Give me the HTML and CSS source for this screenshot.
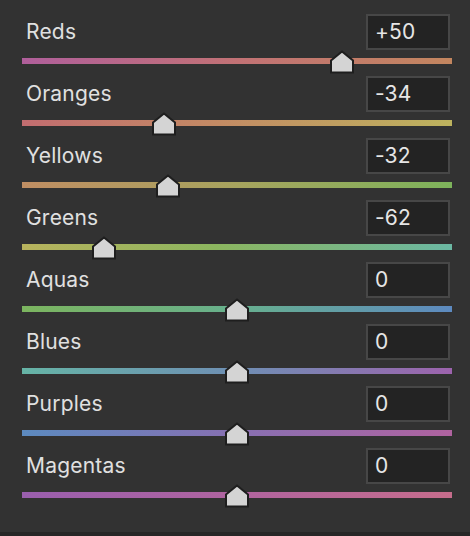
FILE: index.html
```html
<!DOCTYPE html>
<html>
<head>
<meta charset="utf-8">
<link rel="stylesheet" href="styles.css">
</head>
<body>
<div class="panel">
  <div class="row">
    <div class="head"><span class="label">Reds</span><div class="box">+50</div></div>
    <div class="track reds"><svg class="thumb" style="left: calc(74.4% - 13px)" width="26" height="24" viewBox="0 0 26 24"><polygon points="13,1.5 24,10.5 24,22.5 2,22.5 2,10.5"/></svg></div>
  </div>
  <div class="row">
    <div class="head"><span class="label">Oranges</span><div class="box">-34</div></div>
    <div class="track oranges"><svg class="thumb" style="left: calc(33% - 13px)" width="26" height="24" viewBox="0 0 26 24"><polygon points="13,1.5 24,10.5 24,22.5 2,22.5 2,10.5"/></svg></div>
  </div>
  <div class="row">
    <div class="head"><span class="label">Yellows</span><div class="box">-32</div></div>
    <div class="track yellows"><svg class="thumb" style="left: calc(34% - 13px)" width="26" height="24" viewBox="0 0 26 24"><polygon points="13,1.5 24,10.5 24,22.5 2,22.5 2,10.5"/></svg></div>
  </div>
  <div class="row">
    <div class="head"><span class="label">Greens</span><div class="box">-62</div></div>
    <div class="track greens"><svg class="thumb" style="left: calc(19% - 13px)" width="26" height="24" viewBox="0 0 26 24"><polygon points="13,1.5 24,10.5 24,22.5 2,22.5 2,10.5"/></svg></div>
  </div>
  <div class="row">
    <div class="head"><span class="label">Aquas</span><div class="box">0</div></div>
    <div class="track aquas"><svg class="thumb" style="left: calc(50% - 13px)" width="26" height="24" viewBox="0 0 26 24"><polygon points="13,1.5 24,10.5 24,22.5 2,22.5 2,10.5"/></svg></div>
  </div>
  <div class="row">
    <div class="head"><span class="label">Blues</span><div class="box">0</div></div>
    <div class="track blues"><svg class="thumb" style="left: calc(50% - 13px)" width="26" height="24" viewBox="0 0 26 24"><polygon points="13,1.5 24,10.5 24,22.5 2,22.5 2,10.5"/></svg></div>
  </div>
  <div class="row">
    <div class="head"><span class="label">Purples</span><div class="box">0</div></div>
    <div class="track purples"><svg class="thumb" style="left: calc(50% - 13px)" width="26" height="24" viewBox="0 0 26 24"><polygon points="13,1.5 24,10.5 24,22.5 2,22.5 2,10.5"/></svg></div>
  </div>
  <div class="row">
    <div class="head"><span class="label">Magentas</span><div class="box">0</div></div>
    <div class="track magentas"><svg class="thumb" style="left: calc(50% - 13px)" width="26" height="24" viewBox="0 0 26 24"><polygon points="13,1.5 24,10.5 24,22.5 2,22.5 2,10.5"/></svg></div>
  </div>
</div>
<div class="footer"></div>
</body>
</html>
```
FILE: styles.css
```css
html, body {
  margin: 0;
  padding: 0;
  background: #262626;
}
body {
  width: 470px;
  height: 536px;
  overflow: hidden;
  font-family: Inter, "Noto Sans", sans-serif;
}
.panel {
  background: #323232;
  height: 532px;
  box-sizing: border-box;
  padding: 14px 18px 0 22px;
  display: flex;
  flex-direction: column;
}
.row {
  display: flex;
  flex-direction: column;
  height: 62px;
}
.head {
  display: flex;
  align-items: center;
  justify-content: space-between;
  height: 36px;
}
.label {
  margin-left: 4px;
  color: #e0e0e0;
  font-size: 21px;
  letter-spacing: 0.2px;
  line-height: 24px;
}
.box {
  width: 84px;
  height: 36px;
  box-sizing: border-box;
  margin-right: 2px;
  border: 2px solid #474747;
  background: #232323;
  color: #e6e6e6;
  font-size: 21px;
  letter-spacing: 0.2px;
  line-height: 32px;
  padding-left: 7px;
}
.track {
  position: relative;
  margin-top: 8px;
  height: 6px;
}
.thumb {
  position: absolute;
  top: -8px;
  display: block;
}
.thumb polygon {
  fill: #d4d4d4;
  stroke: #1e1e1e;
  stroke-width: 2;
  stroke-linejoin: miter;
}
.reds { background: linear-gradient(to right, #b05f9b, #c27275 50%, #c3865f); }
.oranges { background: linear-gradient(to right, #c26d70, #c38a64 45%, #bdb35e); }
.yellows { background: linear-gradient(to right, #c08e63, #a7a45e 50%, #7db35b); }
.greens { background: linear-gradient(to right, #b8b35d, #8cb65f 45%, #6bb8a3); }
.aquas { background: linear-gradient(to right, #7cb55f, #67b08e 50%, #5d8ac0); }
.blues { background: linear-gradient(to right, #66b4a6, #6f8fb4 50%, #9d63ad); }
.purples { background: linear-gradient(to right, #5c8abf, #8870b2 50%, #b063a0); }
.magentas { background: linear-gradient(to right, #9a5fae, #b0649f 50%, #c66d8c); }
.footer {
  height: 4px;
  background: #262626;
}
```
